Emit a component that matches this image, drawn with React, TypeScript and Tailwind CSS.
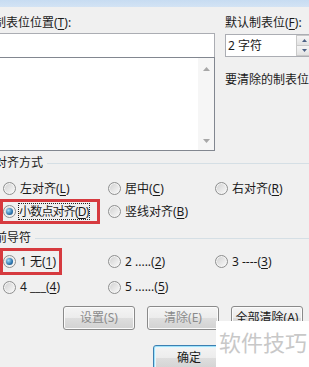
import React from 'react';

const K = ({ children }: { children: React.ReactNode }) => (
  <span className="underline underline-offset-[2px]">{children}</span>
);

const Radio = ({ checked = false }: { checked?: boolean }) => (
  <span className="flex h-[13px] w-[13px] shrink-0 items-center justify-center rounded-full border border-[#8e8f8f] bg-[linear-gradient(135deg,#cfcfcf,#fbfbfb)] shadow-[inset_0_0_0_1px_#f4f4f4]">
    {checked && (
      <span className="h-[7px] w-[7px] rounded-full bg-[radial-gradient(circle_at_35%_35%,#a6e0fb,#2c74ae_60%,#16476f)]" />
    )}
  </span>
);

const RadioItem = ({ label, checked, className }: { label: React.ReactNode; checked?: boolean; className?: string }) => (
  <div className={`flex items-center gap-[4px] whitespace-nowrap ${className ?? ''}`}>
    <Radio checked={checked} />
    <span>{label}</span>
  </div>
);

const Button = ({ children, disabled, isDefault }: { children: React.ReactNode; disabled?: boolean; isDefault?: boolean }) => (
  <div
    className={`flex h-full w-[72px] items-center justify-center whitespace-nowrap rounded-[3px] border bg-[linear-gradient(#f4f4f4_0%,#ececec_50%,#dedede_50%,#d2d2d2_100%)] ${
      isDefault
        ? 'border-[#3c7fb1] shadow-[inset_0_0_0_1px_#9fe2fa,inset_0_0_0_2px_#e6f6fd]'
        : 'border-[#8a8a8a] shadow-[inset_0_0_0_1px_#fbfbfb]'
    } ${disabled ? 'text-[#8b8b8b]' : 'text-[#1b1b1b]'}`}
  >
    {children}
  </div>
);

const Separator = ({ label }: { label: string }) => (
  <div className="-ml-[5px] flex h-[14px] items-center">
    <span className="whitespace-nowrap">{label}</span>
    <div className="ml-[4px] h-px flex-1 bg-[#d5dfe5]" />
  </div>
);

export default function App() {
  return (
    <div className="relative h-[367px] w-[309px] overflow-hidden bg-[#f0f0f0] font-['Noto_Sans','Noto_Sans_CJK_SC',sans-serif] text-[12px] leading-[14px] text-[#1b1b1b]">
      {/* title bar edge */}
      <div className="h-[7px] bg-gradient-to-b from-[#c7dcf2] to-[#d3e3f4]" />

      {/* tab position + default stops */}
      <div className="mt-[9px] flex">
        <div className="-ml-[10px] w-[225px] shrink-0">
          <div className="h-[14px] whitespace-nowrap pl-[4px]">
            制表位位置(<K>T</K>):
          </div>
          <div className="mt-[3px] h-[24px] border border-b-0 border-[#abadb3] bg-white" />
          <div className="flex h-[94px] border border-[#828790] bg-white">
            <div className="flex-1" />
            <div className="flex w-[16px] flex-col items-center justify-between bg-[#f6f6f6] pb-[7px] pt-[9px]">
              <svg width="7" height="4" viewBox="0 0 7 4">
                <path d="M0 4 L3.5 0 L7 4 Z" fill="#a8a8a8" />
              </svg>
              <svg width="7" height="4" viewBox="0 0 7 4">
                <path d="M0 0 L3.5 4 L7 0 Z" fill="#a8a8a8" />
              </svg>
            </div>
          </div>
        </div>

        <div className="ml-[10px] flex-1">
          <div className="h-[14px] whitespace-nowrap">
            默认制表位(<K>F</K>):
          </div>
          <div className="mt-[4px] flex h-[23px] w-[88px] border border-[#abadb3] bg-white">
            <div className="flex-1 whitespace-nowrap pl-[2px] leading-[21px]">2 字符</div>
            <div className="flex w-[16px] flex-col">
              <div className="flex flex-1 items-center justify-center border border-[#c9c9c9] bg-[linear-gradient(#f6f6f6,#e2e2e2)]">
                <svg width="5" height="3" viewBox="0 0 5 3">
                  <path d="M0 3 L2.5 0 L5 3 Z" fill="#4d6185" />
                </svg>
              </div>
              <div className="flex flex-1 items-center justify-center border border-t-0 border-[#c9c9c9] bg-[linear-gradient(#f6f6f6,#e2e2e2)]">
                <svg width="5" height="3" viewBox="0 0 5 3">
                  <path d="M0 0 L2.5 3 L5 0 Z" fill="#4d6185" />
                </svg>
              </div>
            </div>
          </div>
          <div className="mt-[16px] h-[14px] whitespace-nowrap">要清除的制表位:</div>
        </div>
      </div>

      {/* alignment */}
      <div className="mt-[5px]">
        <Separator label="对齐方式" />
      </div>
      <div className="mt-[10px] flex h-[17px] items-center">
        <RadioItem className="w-[108px] pl-[3px]" label={<>左对齐(<K>L</K>)</>} />
        <RadioItem className="w-[107px]" label={<>居中(<K>C</K>)</>} />
        <RadioItem label={<>右对齐(<K>R</K>)</>} />
      </div>
      <div className="mt-[2px] flex h-[25px] items-center">
        <div className="w-[108px]">
          <div className="flex h-[25px] w-[100px] items-center border-[3px] border-[#d63a3f]">
            <Radio checked />
            <span className="ml-[2px] whitespace-nowrap border border-dotted border-[#222] leading-[15px] tracking-[-0.8px]">
              小数点对齐(<K>D</K>)
            </span>
          </div>
        </div>
        <RadioItem label={<>竖线对齐(<K>B</K>)</>} />
      </div>

      {/* leader */}
      <div className="mt-[7px]">
        <Separator label="前导符" />
      </div>
      <div className="mt-[3px] flex h-[27px] items-center">
        <div className="w-[108px]">
          <div className="flex h-[27px] w-[62px] items-center gap-[4px] whitespace-nowrap border-[3px] border-[#d63a3f]">
            <Radio checked />
            <span>
              1 无(<K>1</K>)
            </span>
          </div>
        </div>
        <RadioItem className="w-[107px]" label={<>2 .....(<K>2</K>)</>} />
        <RadioItem label={<>3 ----(<K>3</K>)</>} />
      </div>
      <div className="mt-[5px] flex h-[14px] items-center">
        <RadioItem className="w-[108px] pl-[3px]" label={<>4 ___(<K>4</K>)</>} />
        <RadioItem label={<>5 ......(<K>5</K>)</>} />
      </div>

      {/* actions */}
      <div className="mt-[12px] flex h-[24px] gap-[12px] pl-[63px]">
        <Button disabled>设置(S)</Button>
        <Button disabled>清除(E)</Button>
        <Button>全部清除(A)</Button>
      </div>
      <div className="mt-[15px] flex h-[26px] gap-[6px] pl-[153px]">
        <Button isDefault>确定</Button>
        <Button>取消</Button>
      </div>

      {/* watermark */}
      <div className="absolute left-[216px] top-[321px] h-[46px] w-[93px] whitespace-nowrap bg-white pl-[3px] text-[22px] leading-[42px] text-[#c8c8c8]">
        软件技巧
      </div>
    </div>
  );
}
